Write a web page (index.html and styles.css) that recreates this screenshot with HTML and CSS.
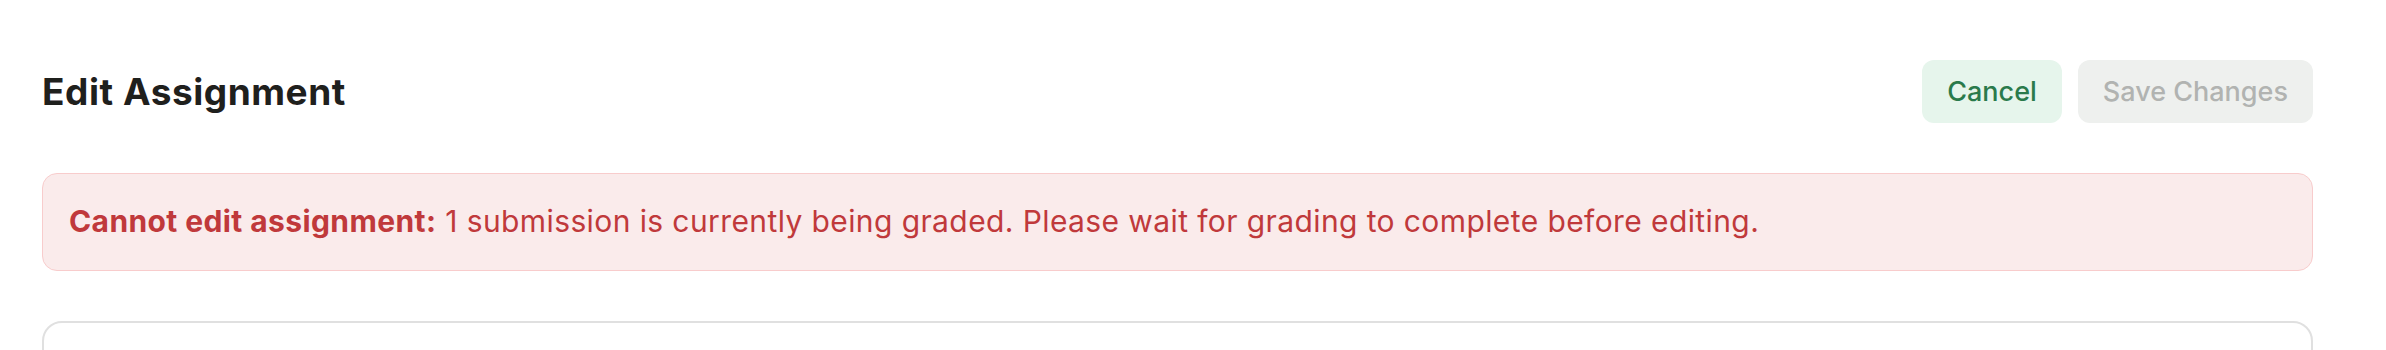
FILE: index.html
```html
<!DOCTYPE html>
<html lang="en">
<head>
<meta charset="utf-8">
<title>Edit Assignment</title>
<link rel="stylesheet" href="styles.css">
</head>
<body>
<main class="page">
  <header class="page-header">
    <h1 class="page-title">Edit Assignment</h1>
    <div class="actions">
      <button class="btn btn-cancel" type="button">Cancel</button>
      <button class="btn btn-save" type="button" disabled>Save Changes</button>
    </div>
  </header>
  <div class="alert"><strong>Cannot edit assignment:</strong> 1 submission is currently being graded. Please wait for grading to complete before editing.</div>
  <section class="card"></section>
</main>
</body>
</html>
```

FILE: styles.css
```css
* { box-sizing: border-box; }
html, body { margin: 0; padding: 0; background: #ffffff; }
body {
  font-family: Inter, "Noto Sans", "Liberation Sans", sans-serif;
  color: #1f201d;
  overflow: hidden;
}
.page {
  padding: 60px 73px 0 42px;
}
.page-header {
  display: flex;
  align-items: center;
  justify-content: space-between;
  height: 63px;
}
.page-title {
  margin: 0;
  font-size: 37px;
  font-weight: 700;
  letter-spacing: 0.55px;
  color: #1f201d;
}
.actions {
  display: flex;
  gap: 16px;
}
.btn {
  height: 63px;
  padding: 0 25px;
  border: none;
  border-radius: 12px;
  font-family: inherit;
  font-size: 27px;
  font-weight: 500;
}
.btn-cancel {
  background: #e6f5ec;
  color: #2a7a4b;
}
.btn-save {
  background: #eef0ee;
  color: #b1b3b1;
}
.alert {
  margin-top: 50px;
  height: 98px;
  padding: 0 26px;
  line-height: 95px;
  background: #faebeb;
  border: 1.5px solid #f8cccc;
  border-radius: 15px;
  font-size: 30px;
  letter-spacing: 0.4px;
  color: #c0393b;
  white-space: nowrap;
}
.alert strong { font-weight: 700; }
.card {
  margin-top: 50px;
  height: 60px;
  border: 2px solid #e0e0e0;
  border-radius: 20px;
}
```
